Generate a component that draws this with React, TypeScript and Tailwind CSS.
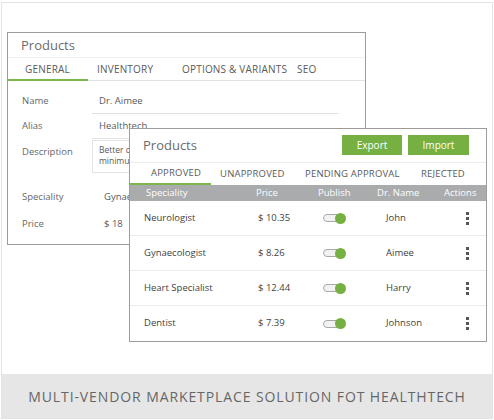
import React from "react";

const font = { fontFamily: '"Open Sans", "Liberation Sans", sans-serif' };

function Toggle() {
  return (
    <div className="relative w-[24px] h-[12px] flex items-center">
      <div className="w-[19px] h-[8px] rounded-full border border-[#a9a9a9] bg-[#f2f2f2]" />
      <div className="absolute left-[12px] top-[0.5px] w-[11px] h-[11px] rounded-full bg-[#76b043]" />
    </div>
  );
}

function Kebab() {
  return (
    <div className="flex flex-col gap-[2px] items-center w-[3px]">
      <span className="block w-[3px] h-[3px] bg-[#555]" />
      <span className="block w-[3px] h-[3px] bg-[#555]" />
      <span className="block w-[3px] h-[3px] bg-[#555]" />
    </div>
  );
}

const rows = [
  { s: "Neurologist", p: "$ 10.35", n: "John" },
  { s: "Gynaecologist", p: "$ 8.26", n: "Aimee" },
  { s: "Heart Specialist", p: "$ 12.44", n: "Harry" },
  { s: "Dentist", p: "$ 7.39", n: "Johnson" },
];

export default function App() {
  return (
    <div className="w-[494px] h-[420px] bg-white pt-[2px] pl-[1px] pr-[1px] pb-[1px]" style={font}>
      <div className="h-full border border-[#e3e3e3] flex flex-col">
        <div className="flex-1 relative">
          {/* back panel */}
          <div className="ml-[5px] mt-[29px] w-[359px] h-[213px] border border-[#9c9c9c] bg-white flex flex-col">
            <div className="h-[25px] flex items-center pl-[13px] pt-[2px] text-[13px] text-[#6b6b6b] border-b border-[#f0f0f0]">
              Products
            </div>
            <div className="h-[23px] flex items-end text-[10px] tracking-[0.2px] text-[#5a5a5a] border-b border-[#e2e2e2]">
              <div className="w-[80px] h-full flex items-center pl-[17px] border-b-2 border-[#7ab648] -mb-[1px]">GENERAL</div>
              <div className="w-[87px] h-full flex items-center pl-[9px]">INVENTORY</div>
              <div className="w-[115px] h-full flex items-center pl-[7px]">OPTIONS &amp; VARIANTS</div>
              <div className="h-full flex items-center pl-[7px]">SEO</div>
            </div>
            <div className="pl-[14px] text-[9.5px] text-[#666] flex flex-col">
              <div className="flex h-[25px] items-center mt-[8px]">
                <span className="w-[70px]">Name</span>
                <span className="w-[247px] h-full flex items-center pl-[7px] border-b border-[#e2e2e2] text-[#5a5a5a]">Dr. Aimee</span>
              </div>
              <div className="flex h-[25px] items-center">
                <span className="w-[70px]">Alias</span>
                <span className="w-[247px] h-full flex items-center pl-[7px] border-b border-[#e2e2e2] text-[#5a5a5a]">Healthtech</span>
              </div>
              <div className="flex mt-[1px]">
                <span className="w-[70px] pt-[5px]">Description</span>
                <div className="w-[247px] h-[33px] border border-[#e3e3e3] pl-[6px] pt-[3px] text-[8.5px] leading-[11px] text-[#5a5a5a]">
                  Better care, minimum cost
                  <br />
                  minimum waiting
                </div>
              </div>
              <div className="flex h-[20px] items-center mt-[14px]">
                <span className="w-[82px]">Speciality</span>
                <span className="text-[#5a5a5a]">Gynaecologist</span>
              </div>
              <div className="flex h-[20px] items-center mt-[7px]">
                <span className="w-[82px]">Price</span>
                <span className="text-[#5a5a5a]">$ 18</span>
              </div>
            </div>
          </div>

          {/* front panel */}
          <div className="absolute left-[127px] top-[125px] w-[358px] h-[214px] border border-[#9c9c9c] bg-white flex flex-col">
            <div className="h-[34px] flex items-center justify-between pl-[13px] pr-[17px] border-b border-[#ececec]">
              <span className="text-[13px] text-[#6b6b6b]">Products</span>
              <div className="flex gap-[6px]">
                <div className="w-[60px] h-[20px] bg-[#76b043] text-white text-[10px] flex items-center justify-center">Export</div>
                <div className="w-[61px] h-[20px] bg-[#76b043] text-white text-[10px] flex items-center justify-center">Import</div>
              </div>
            </div>
            <div className="h-[23px] flex text-[9.5px] tracking-[0.2px] text-[#5a5a5a]">
              <div className="w-[81px] h-full flex items-center pl-[21px] border-b-2 border-[#7ab648]">APPROVED</div>
              <div className="w-[89px] h-full flex items-center pl-[9px]">UNAPPROVED</div>
              <div className="w-[116px] h-full flex items-center pl-[5px]">PENDING APPROVAL</div>
              <div className="h-full flex items-center pl-[5px]">REJECTED</div>
            </div>
            <div className="h-[16px] bg-[#a9abad] text-white text-[9.5px] grid grid-cols-[126px_62px_59px_67px_1fr] items-center">
              <span className="pl-[16px]">Speciality</span>
              <span>Price</span>
              <span>Publish</span>
              <span>Dr. Name</span>
              <span>Actions</span>
            </div>
            <div className="flex flex-col">
              {rows.map((r, i) => (
                <div
                  key={r.s}
                  className={
                    "h-[35px] grid grid-cols-[126px_62px_59px_67px_1fr] items-center text-[9.5px] text-[#3f3f3f] " +
                    (i < rows.length - 1 ? "border-b border-[#ececec]" : "")
                  }
                >
                  <span className="pl-[14px]">{r.s}</span>
                  <span className="pl-[2px]">{r.p}</span>
                  <span className="pl-[5px]"><Toggle /></span>
                  <span className="pl-[9px]">{r.n}</span>
                  <span className="pl-[22px]"><Kebab /></span>
                </div>
              ))}
            </div>
          </div>
        </div>
        <div className="h-[44px] bg-[#e6e6e6] flex items-center justify-center text-[14px] text-[#666] tracking-[0.9px]">
          MULTI-VENDOR MARKETPLACE SOLUTION FOT HEALTHTECH
        </div>
      </div>
    </div>
  );
}
